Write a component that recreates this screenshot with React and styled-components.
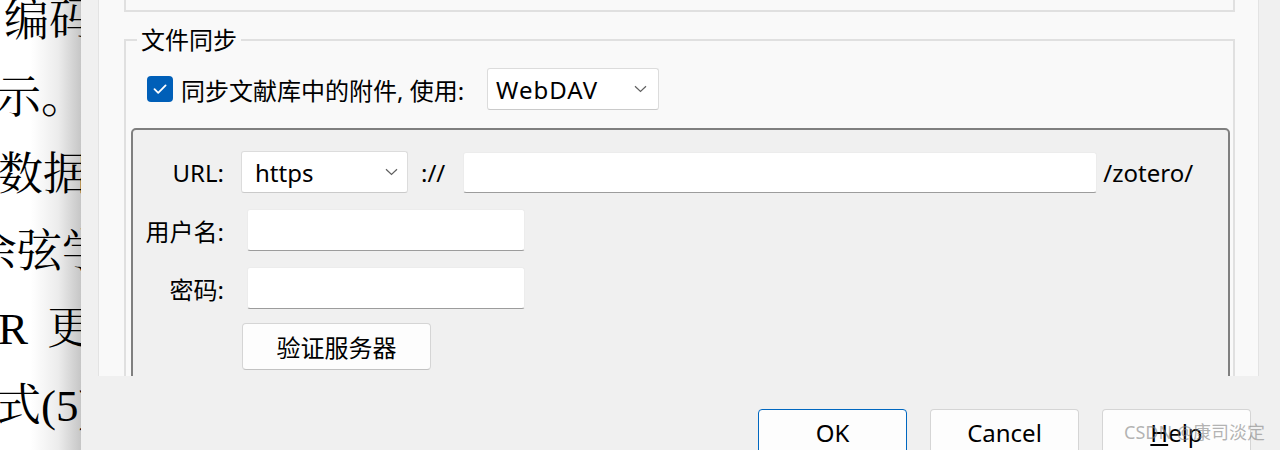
import React from "react";
import styled, { createGlobalStyle } from "styled-components";

const UI_FONT = `"Noto Sans", "Noto Sans CJK SC", sans-serif`;

const GlobalStyle = createGlobalStyle`
  html, body {
    margin: 0;
    padding: 0;
    background: #ffffff;
  }
  body {
    width: 1280px;
    height: 450px;
    overflow: hidden;
    font-family: ${UI_FONT};
  }
`;

const Page = styled.div`
  position: relative;
  display: flex;
  width: 1280px;
  height: 450px;
  overflow: hidden;
`;

/* ---------- document behind the dialog ---------- */
const DocPane = styled.div`
  flex: none;
  width: 81px;
  height: 450px;
  overflow: hidden;
  background: linear-gradient(
    to right,
    #ffffff 0%,
    #ffffff 38%,
    #ececec 72%,
    #c6c6c6 100%
  );
  font-family: "Liberation Serif", "Noto Serif CJK SC", "Noto Sans CJK SC", serif;
  font-size: 45px;
  line-height: 77px;
  color: #000;
`;

const DocLines = styled.div`
  margin-top: -17px;
`;

const DocLine = styled.div`
  white-space: nowrap;
  margin-left: ${(p) => p.$indent || 0}px;
  word-spacing: ${(p) => p.$wordGap || 0}px;
`;

/* ---------- dialog ---------- */
const Dialog = styled.div`
  flex: 1;
  display: flex;
  flex-direction: column;
  background: #f0f0f0;
  font-family: ${UI_FONT};
  font-size: 24px;
  color: #000;
`;

const ScrollPane = styled.div`
  flex: none;
  box-sizing: border-box;
  margin-left: 17px;
  width: 1161px;
  height: 376px;
  padding: 0 23px 0 25px;
  background: #f9f9f9;
  border-left: 1px solid #e3e3e3;
  border-right: 1px solid #e3e3e3;
  overflow: hidden;
`;

const TopBox = styled.div`
  box-sizing: border-box;
  height: 12px;
  border: 2px solid #e0e0e0;
  border-top: none;
`;

const GroupBox = styled.fieldset`
  margin: 14px 0 0 0;
  padding: 0;
  min-width: 0;
  border: 2px solid #e0e0e0;
`;

const Legend = styled.legend`
  margin-left: 11px;
  padding: 0 4px;
  font-size: 24px;
  line-height: 28px;
`;

const SyncRow = styled.div`
  display: flex;
  align-items: center;
  height: 42px;
  padding: 14px 0 0 21px;
`;

const CheckBox = styled.span`
  flex: none;
  display: flex;
  align-items: center;
  justify-content: center;
  width: 26px;
  height: 26px;
  border-radius: 4px;
  background: #005fb8;
`;

const CheckLabel = styled.span`
  margin-left: 8px;
  white-space: nowrap;
`;

const Select = styled.div`
  flex: none;
  box-sizing: border-box;
  display: flex;
  align-items: center;
  justify-content: space-between;
  width: ${(p) => p.$width}px;
  height: 42px;
  margin-left: ${(p) => p.$ml || 0}px;
  padding: 0 ${(p) => p.$padRight || 10}px 0 ${(p) => p.$padLeft || 10}px;
  background: #ffffff;
  border: 1px solid #dcdcdc;
  border-bottom-color: #cacaca;
  border-radius: 3px;
  white-space: nowrap;
`;

const SelectText = styled.span`
  letter-spacing: ${(p) => p.$spacing || 0}px;
`;

const InnerBox = styled.div`
  display: flex;
  flex-direction: column;
  margin: 18px 3px 0 5px;
  padding: 21px 0 40px 0;
  background: #f0f0f0;
  border: 2px solid #7f7f7f;
  border-radius: 5px;
`;

const FormRow = styled.div`
  display: flex;
  align-items: center;
  height: ${(p) => p.$h || 42}px;
  margin-top: ${(p) => p.$mt || 0}px;
`;

const FieldLabel = styled.span`
  flex: none;
  width: 91px;
  text-align: right;
  white-space: nowrap;
`;

const Sep = styled.span`
  flex: none;
  margin-left: ${(p) => p.$ml || 0}px;
  white-space: nowrap;
`;

const TextInput = styled.input`
  flex: none;
  box-sizing: border-box;
  width: ${(p) => p.$width}px;
  height: ${(p) => p.$height || 42}px;
  margin: 0 0 0 ${(p) => p.$ml || 0}px;
  align-self: ${(p) => (p.$bottom ? "flex-end" : "center")};
  padding: 0 8px;
  background: #ffffff;
  border: 1px solid #ececec;
  border-bottom: 1px solid #9c9c9c;
  border-radius: 3px;
  font: inherit;
  outline: none;
`;

const PushButton = styled.button`
  flex: none;
  box-sizing: border-box;
  width: ${(p) => p.$width}px;
  height: ${(p) => p.$height}px;
  margin-left: ${(p) => p.$ml || 0}px;
  padding: 0;
  background: #fdfdfd;
  border: 1px solid ${(p) => (p.$primary ? "#0067c0" : "#d5d5d5")};
  border-bottom-color: ${(p) => (p.$primary ? "#0067c0" : "#c2c2c2")};
  border-radius: 4px;
  font-family: ${UI_FONT};
  font-size: 24px;
  color: #000;
  text-align: center;
`;

const ButtonBar = styled.div`
  flex: 1;
  display: flex;
  justify-content: flex-end;
  gap: 23px;
  padding: 33px 29px 0 0;
`;

const Watermark = styled.div`
  position: absolute;
  right: 15px;
  top: 420px;
  font-family: ${UI_FONT};
  font-size: 18px;
  line-height: 24px;
  color: rgba(130, 130, 130, 0.6);
  white-space: nowrap;
  pointer-events: none;
`;

const Chevron = () => (
  <svg width="13" height="8" viewBox="0 0 13 8">
    <path d="M1 1.2 L6.5 6.5 L12 1.2" fill="none" stroke="#606060" strokeWidth="1.2" />
  </svg>
);

const Check = () => (
  <svg width="26" height="26" viewBox="0 0 26 26">
    <path
      d="M7.5 13.2 L11.2 16.8 L18.6 9.4"
      fill="none"
      stroke="#ffffff"
      strokeWidth="1.8"
      strokeLinecap="round"
      strokeLinejoin="round"
    />
  </svg>
);

export default function App() {
  return (
    <>
      <GlobalStyle />
      <Page>
        <DocPane>
          <DocLines>
            <DocLine $indent={4}>编码</DocLine>
            <DocLine $indent={-4}>示。</DocLine>
            <DocLine $indent={-2}>数据</DocLine>
            <DocLine $indent={-28}>余弦学</DocLine>
            <DocLine $indent={-2} $wordGap={8}>R 更</DocLine>
            <DocLine $indent={-4}>式(5)</DocLine>
          </DocLines>
        </DocPane>

        <Dialog>
          <ScrollPane>
            <TopBox />
            <GroupBox>
              <Legend>文件同步</Legend>
              <SyncRow>
                <CheckBox>
                  <Check />
                </CheckBox>
                <CheckLabel>同步文献库中的附件, 使用:</CheckLabel>
                <Select $width={172} $ml={23} $padLeft={8} $padRight={11}>
                  <SelectText $spacing={1}>WebDAV</SelectText>
                  <Chevron />
                </Select>
              </SyncRow>

              <InnerBox>
                <FormRow>
                  <FieldLabel>URL:</FieldLabel>
                  <Select $width={167} $ml={17} $padLeft={13} $padRight={9}>
                    <SelectText>https</SelectText>
                    <Chevron />
                  </Select>
                  <Sep $ml={13}>://</Sep>
                  <TextInput $width={634} $height={41} $ml={18} $bottom readOnly />
                  <Sep $ml={6}>/zotero/</Sep>
                </FormRow>
                <FormRow $mt={16}>
                  <FieldLabel>用户名:</FieldLabel>
                  <TextInput $width={278} $ml={23} readOnly />
                </FormRow>
                <FormRow $mt={16}>
                  <FieldLabel>密码:</FieldLabel>
                  <TextInput $width={278} $ml={23} readOnly />
                </FormRow>
                <FormRow $mt={14} $h={47}>
                  <FieldLabel />
                  <PushButton $width={189} $height={47} $ml={18}>
                    验证服务器
                  </PushButton>
                </FormRow>
              </InnerBox>
            </GroupBox>
          </ScrollPane>

          <ButtonBar>
            <PushButton $width={149} $height={46} $primary>
              OK
            </PushButton>
            <PushButton $width={149} $height={46}>
              Cancel
            </PushButton>
            <PushButton $width={149} $height={46}>
              <u>H</u>elp
            </PushButton>
          </ButtonBar>
        </Dialog>

        <Watermark>CSDN @康司淡定</Watermark>
      </Page>
    </>
  );
}
